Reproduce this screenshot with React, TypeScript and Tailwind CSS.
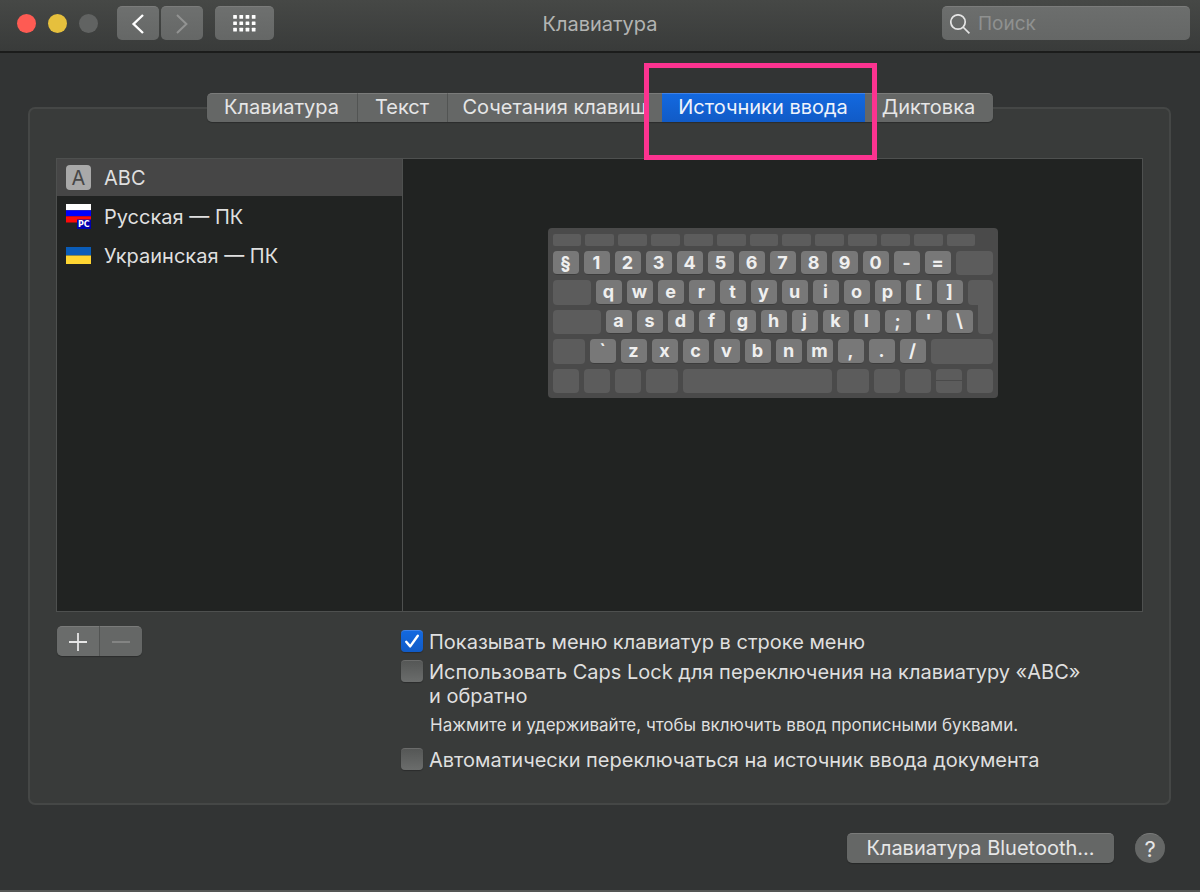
import type { ReactNode } from "react";
import clsx from "clsx";

const TABS = [
  { label: "Клавиатура", width: "w-[150px]" },
  { label: "Текст", width: "w-[90px]" },
  { label: "Сочетания клавиш", width: "w-[215px]" },
  { label: "Источники ввода", width: "w-[203px]", active: true },
  { label: "Диктовка", width: "w-[128px]" },
];

const SOURCES = [
  { label: "ABC", icon: <AbcIcon />, selected: true },
  { label: "Русская — ПК", icon: <RussianIcon /> },
  { label: "Украинская — ПК", icon: <UkrainianIcon /> },
];

function AbcIcon() {
  return (
    <span className="flex size-[25px] items-center justify-center rounded bg-[#a9a9a9] text-[20px] leading-none text-[#474747]">
      A
    </span>
  );
}

function RussianIcon() {
  return (
    <svg width="25" height="25" viewBox="0 0 25 25" aria-hidden="true">
      <rect width="25" height="6.3" fill="#fff" />
      <rect y="6.3" width="25" height="6" fill="#0000fe" />
      <rect y="12.3" width="25" height="6.2" fill="#fe0a0a" />
      <rect x="11" y="15.5" width="14" height="9.5" fill="#0000b0" />
      <text x="12" y="23.4" fill="#fff" fontSize="8" fontWeight="700" fontFamily="DejaVu Sans, sans-serif">
        PC
      </text>
    </svg>
  );
}

function UkrainianIcon() {
  return (
    <svg width="25" height="25" viewBox="0 0 25 25" aria-hidden="true">
      <rect y="4" width="25" height="8.5" fill="#0a5cb8" />
      <rect y="12.5" width="25" height="8.5" fill="#fed532" />
    </svg>
  );
}

function ToolbarButton({ label, className, children }: { label: string; className?: string; children: ReactNode }) {
  return (
    <button
      type="button"
      aria-label={label}
      className={clsx(
        "flex h-[34px] items-center justify-center rounded-[5px] border-t border-[#7b7c7b] bg-linear-to-b from-[#6e706f] to-[#656766]",
        className,
      )}
    >
      {children}
    </button>
  );
}

function TitleBar() {
  return (
    <header className="grid h-[53px] grid-cols-[1fr_auto_1fr] items-start border-b-2 border-[#1b1c1b] bg-linear-to-b from-[#464846] to-[#393b3a] pt-1.5">
      <div className="flex items-center pl-[17px]">
        <div className="flex gap-3">
          <button type="button" aria-label="Закрыть" className="size-[19px] rounded-full bg-[#fe5b53]" />
          <button type="button" aria-label="Свернуть" className="size-[19px] rounded-full bg-[#e6c03d]" />
          <button type="button" aria-label="Развернуть" className="size-[19px] rounded-full bg-[#616362]" />
        </div>
        <div className="ml-[19px] flex gap-0.5">
          <ToolbarButton label="Назад" className="w-[42px]">
            <svg width="14" height="20" viewBox="0 0 14 20" fill="none" stroke="#fff" strokeWidth="2.4">
              <path d="M12 1 2.6 10l9.4 9" />
            </svg>
          </ToolbarButton>
          <ToolbarButton label="Вперёд" className="w-[42px]">
            <svg width="14" height="20" viewBox="0 0 14 20" fill="none" stroke="#929392" strokeWidth="2">
              <path d="m2 1 9.4 9L2 19" />
            </svg>
          </ToolbarButton>
        </div>
        <ToolbarButton label="Показать все" className="ml-3 w-[59px]">
          <svg width="24" height="17" viewBox="0 0 24 17" fill="#fff">
            {[0, 1, 2].map((row) =>
              [0, 1, 2, 3].map((col) => (
                <rect key={`${row}-${col}`} x={col * 6.2 + 0.2} y={row * 6.4} width="3.7" height="3.7" rx="0.5" />
              )),
            )}
          </svg>
        </ToolbarButton>
      </div>

      <h1 className="h-[34px] text-[20px] leading-[36px] text-[#b3b4b3]">Клавиатура</h1>

      <label className="mr-2.5 flex h-[34px] w-[248px] items-center gap-2 justify-self-end rounded-[5px] border-t border-[#7b7c7b] bg-linear-to-b from-[#6c6e6d] to-[#656766] pl-2">
        <svg width="20" height="20" viewBox="0 0 20 20" fill="none" stroke="#e4e4e4" strokeWidth="1.7" className="shrink-0">
          <circle cx="8" cy="8" r="7.2" />
          <path d="m13 13 6.4 6.4" />
        </svg>
        <input
          type="search"
          aria-label="Поиск"
          placeholder="Поиск"
          className="h-full w-full min-w-0 bg-transparent text-[19px] text-[#dfdfdf] outline-none placeholder:text-[#8f9190]"
        />
      </label>
    </header>
  );
}

function Tabs() {
  return (
    <div role="tablist" className="relative z-10 mx-auto flex h-[29px] rounded-[5px] shadow-[0_1px_1px_rgba(0,0,0,0.25)]">
      {TABS.map((tab) => (
        <div key={tab.label} className={clsx("relative", tab.width)}>
          <button
            type="button"
            role="tab"
            aria-selected={!!tab.active}
            className={clsx(
              "h-full w-full border-t pb-0.5 text-[20px] leading-[26px] whitespace-nowrap",
              tab.active
                ? "border-[#3f82e8] bg-linear-to-b from-[#1369e0] to-[#115bc6] text-[#eef3fb]"
                : "border-[#7a7b7a] bg-[#656766] text-[#e6e6e6]",
              tab.label === "Клавиатура" && "rounded-l-[5px]",
              tab.label === "Диктовка" && "rounded-r-[5px]",
              (tab.label === "Текст" || tab.label === "Сочетания клавиш") && "border-l border-l-[#525453]",
            )}
          >
            {tab.label}
          </button>
          {tab.active && (
            <div className="pointer-events-none absolute -top-[30px] -right-3 -bottom-[38px] -left-[18px] z-10 border-5 border-[#fc3390]" />
          )}
        </div>
      ))}
    </div>
  );
}

function Blank({ className }: { className?: string }) {
  return <span className={clsx("bg-[#5c5c5c]", className)} />;
}

function Keys({ chars }: { chars: string }) {
  return chars.split("").map((char) => (
    <span
      key={char}
      className="flex w-[26px] items-center justify-center rounded-[4px] border-b border-[#3c3c3c] bg-[#787878] text-[18px] leading-none font-bold text-[#efefef]"
    >
      {char}
    </span>
  ));
}

function KeyboardPreview() {
  return (
    <div className="grid h-[170px] w-[450px] grid-rows-[12px_repeat(5,1fr)] gap-y-[5px] rounded bg-[#4a4a4a] px-[5px] pt-1.5 pb-[5px]">
      <div className="mr-[17px] flex gap-1">
        {Array.from({ length: 13 }).map((_, i) => (
          <Blank key={i} className="flex-1 rounded-xs" />
        ))}
      </div>
      <div className="flex gap-[5px]">
        <Keys chars="§1234567890-=" />
        <Blank className="flex-1 rounded-[4px]" />
      </div>
      <div className="flex gap-[5px]">
        <Blank className="w-[38px] rounded-[4px]" />
        <Keys chars="qwertyuiop[]" />
        <Blank className="flex-1 rounded-t-[4px] rounded-bl-[4px]" />
      </div>
      <div className="flex gap-[5px]">
        <Blank className="w-12 rounded-[4px]" />
        <Keys chars="asdfghjkl;'\" />
        {/* lower half of the return key, joined to the row above */}
        <Blank className="-mt-2 flex-1 rounded-b-[4px]" />
      </div>
      <div className="flex gap-[5px]">
        <Blank className="w-8 rounded-[4px]" />
        <Keys chars="`zxcvbnm,./" />
        <Blank className="flex-1 rounded-[4px]" />
      </div>
      <div className="flex gap-[5px]">
        <Blank className="w-[26px] rounded-[4px]" />
        <Blank className="w-[26px] rounded-[4px]" />
        <Blank className="w-[26px] rounded-[4px]" />
        <Blank className="w-8 rounded-[4px]" />
        <Blank className="flex-1 rounded-[4px]" />
        <Blank className="w-8 rounded-[4px]" />
        <Blank className="w-[26px] rounded-[4px]" />
        <Blank className="w-[26px] rounded-[4px]" />
        <span className="flex w-[26px] flex-col gap-px">
          <Blank className="flex-1 rounded-t-[4px]" />
          <Blank className="flex-1 rounded-b-[4px]" />
        </span>
        <Blank className="w-[26px] rounded-[4px]" />
      </div>
    </div>
  );
}

function Checkbox({ checked, children }: { checked?: boolean; children: ReactNode }) {
  return (
    <label className="flex gap-1.5 text-[20px] leading-6 text-[#dfdfdf]">
      <span className="relative size-[22px] shrink-0">
        <input
          type="checkbox"
          defaultChecked={checked}
          className="peer block size-full appearance-none rounded border-t border-[#6b6c6b] bg-linear-to-b from-[#555756] to-[#6b6d6c] shadow-[0_1px_1px_rgba(0,0,0,0.25)] checked:border-[#3f82e8] checked:from-[#1369e0] checked:to-[#115bc6]"
        />
        <svg
          viewBox="0 0 22 22"
          fill="none"
          stroke="#fff"
          strokeWidth="2.4"
          strokeLinecap="round"
          strokeLinejoin="round"
          className="pointer-events-none absolute inset-0 hidden size-full peer-checked:block"
        >
          <path d="m5.2 11.8 4 4.6L16.8 5.8" />
        </svg>
      </span>
      <span>{children}</span>
    </label>
  );
}

export default function App() {
  return (
    <div className="flex min-h-screen flex-col border-b-2 border-[#555655] bg-[#323434] font-['Inter','Liberation_Sans',sans-serif]">
      <TitleBar />

      <main className="flex flex-1 flex-col pt-10 pr-[29px] pl-7">
        <Tabs />

        <section className="-mt-[15px] flex flex-1 flex-col rounded-[7px] border-2 border-[#454746] bg-[#393b3a] px-[26px] pt-[49px]">
          <div className="flex flex-1 border border-[#4e504f] bg-[#212322]">
            <ul className="flex w-[346px] flex-col gap-0.5 border-r border-[#4e504f]">
              {SOURCES.map((source) => (
                <li key={source.label}>
                  <button
                    type="button"
                    className={clsx(
                      "flex h-[37px] w-full items-center gap-[13px] pl-[9px] text-[20px] text-[#dfdfdf]",
                      source.selected && "bg-[#464646]",
                    )}
                  >
                    {source.icon}
                    {source.label}
                  </button>
                </li>
              ))}
            </ul>
            <div className="flex flex-1 items-start justify-center pt-[69px]">
              <KeyboardPreview />
            </div>
          </div>

          <div className="flex pt-[14px] pb-[31px]">
            <div className="w-[345px] shrink-0 pl-px">
              <div className="flex h-[30px] w-[85px] rounded-[5px] shadow-[0_1px_1px_rgba(0,0,0,0.25)]">
                <button
                  type="button"
                  aria-label="Добавить"
                  className="flex flex-1 items-center justify-center rounded-l-[5px] border-t border-r border-[#7a7b7a] border-r-[#525453] bg-[#6a6c6b]"
                >
                  <svg width="18" height="18" viewBox="0 0 18 18" stroke="#e6e6e6" strokeWidth="1.8">
                    <path d="M9 0v18M0 9h18" />
                  </svg>
                </button>
                <button
                  type="button"
                  aria-label="Удалить"
                  className="flex flex-1 items-center justify-center rounded-r-[5px] border-t border-[#7a7b7a] bg-[#656766]"
                >
                  <svg width="18" height="18" viewBox="0 0 18 18" stroke="#8b8c8b" strokeWidth="1.6">
                    <path d="M0 9h18" />
                  </svg>
                </button>
              </div>
            </div>

            <div className="pt-1">
              <Checkbox checked>Показывать меню клавиатур в строке меню</Checkbox>
              <div className="mt-1.5">
                <Checkbox>
                  Использовать Caps Lock для переключения на клавиатуру «ABC»
                  <br />и обратно
                </Checkbox>
              </div>
              <p className="mt-[5px] pl-[29px] text-[17px] leading-6 text-[#dfdfdf]">
                Нажмите и удерживайте, чтобы включить ввод прописными буквами.
              </p>
              <div className="mt-[11px]">
                <Checkbox>Автоматически переключаться на источник ввода документа</Checkbox>
              </div>
            </div>
          </div>
        </section>
      </main>

      <footer className="flex items-center justify-end gap-[21px] pt-7 pr-[35px] pb-[27px]">
        <button
          type="button"
          className="h-[30px] w-[267px] rounded-[5px] border-t border-[#7a7b7a] bg-[#656766] pb-0.5 text-[20px] leading-[26px] text-[#e6e6e6] shadow-[0_1px_1px_rgba(0,0,0,0.25)]"
        >
          Клавиатура Bluetooth...
        </button>
        <button
          type="button"
          aria-label="Справка"
          className="size-[30px] rounded-full border-t border-[#7a7b7a] bg-[#656766] text-[22px] leading-7 text-[#e6e6e6]"
        >
          ?
        </button>
      </footer>
    </div>
  );
}
